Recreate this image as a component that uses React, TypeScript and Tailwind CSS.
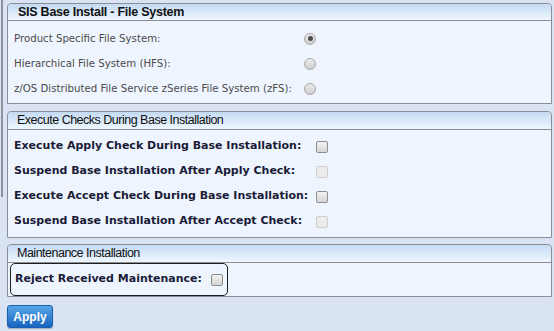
import React from "react";

const radioRows = [
  { label: "Product Specific File System:", checked: true },
  { label: "Hierarchical File System (HFS):", checked: false },
  { label: "z/OS Distributed File Service zSeries File System (zFS):", checked: false },
];

const checkRows = [
  { label: "Execute Apply Check During Base Installation:", disabled: false },
  { label: "Suspend Base Installation After Apply Check:", disabled: true },
  { label: "Execute Accept Check During Base Installation:", disabled: false },
  { label: "Suspend Base Installation After Accept Check:", disabled: true },
];

const Radio: React.FC<{ checked: boolean }> = ({ checked }) => (
  <span className="flex h-[12px] w-[12px] items-center justify-center rounded-full border border-[#a9a9a9] bg-gradient-to-b from-[#ececec] to-[#cfcfcf]">
    {checked && <span className="h-[5px] w-[5px] rounded-full bg-[#4a4a4a]" />}
  </span>
);

const Checkbox: React.FC<{ disabled?: boolean }> = ({ disabled }) =>
  disabled ? (
    <span className="block h-[12px] w-[12px] rounded-[2px] border border-[#cfcfcf] bg-[#ebebeb]" />
  ) : (
    <span className="block h-[12px] w-[12px] rounded-[2px] border border-[#8f8f8f] bg-gradient-to-b from-[#f2f2f2] to-[#d6d6d6]" />
  );

const PanelHeader: React.FC<{ title: string; bold?: boolean }> = ({ title, bold }) => (
  <div
    className={`flex items-center rounded-t-[4px] border-b border-[#8b8f95] bg-gradient-to-b from-[#c4daf3] to-[#eef7fe] text-[12.5px] leading-none text-[#111] ${
      bold ? "h-[17px] pl-[10px] font-bold tracking-[-0.25px]" : "h-[18px] pl-[9px] font-normal tracking-[-0.5px]"
    }`}
    style={{ fontFamily: '"Liberation Sans", Arial, sans-serif' }}
  >
    {title}
  </div>
);

const App: React.FC = () => {
  return (
    <div className="flex h-[331px] w-[554px] overflow-hidden bg-[#dae3f3]">
      <div className="ml-[1px] h-[197px] w-[2px] shrink-0 bg-[#8e939b]" />

      <div className="ml-[4px] mr-[2px] mt-[3px] flex flex-1 flex-col">
        {/* File system */}
        <div className="mb-[7px] rounded-t-[4px] border border-[#8b8f95] bg-[#eef5fe]">
          <PanelHeader title="SIS Base Install - File System" bold />
          <div
            className="flex flex-col pb-[2px] pl-[6px] pt-[5px] text-[10.2px] text-[#4b4b4b]"
            style={{ fontFamily: '"DejaVu Sans", Verdana, sans-serif' }}
          >
            {radioRows.map((row) => (
              <div key={row.label} className="flex h-[25px] items-center">
                <span className="w-[290px] whitespace-nowrap">{row.label}</span>
                <Radio checked={row.checked} />
              </div>
            ))}
          </div>
        </div>

        {/* Checks */}
        <div className="mb-[6px] rounded-t-[4px] border border-[#8b8f95] bg-[#eef5fe]">
          <PanelHeader title="Execute Checks During Base Installation" />
          <div
            className="flex flex-col pb-[3px] pl-[6px] pt-[4px] text-[11px] font-bold text-[#1b1b38]"
            style={{ fontFamily: '"DejaVu Sans", Verdana, sans-serif' }}
          >
            {checkRows.map((row) => (
              <div key={row.label} className="flex h-[25px] items-center">
                <span className="w-[302px] whitespace-nowrap">{row.label}</span>
                <Checkbox disabled={row.disabled} />
              </div>
            ))}
          </div>
        </div>

        {/* Maintenance */}
        <div className="rounded-t-[4px] border border-[#8b8f95] bg-[#eef5fe]">
          <PanelHeader title="Maintenance Installation" />
          <div className="flex pl-[2px]">
            <div
              className="flex h-[33px] w-[218px] items-center gap-[9px] rounded-[5px] border-[1.5px] border-[#1e1e1e] pl-[4px] text-[11px] font-bold text-[#1b1b38]"
              style={{ fontFamily: '"DejaVu Sans", Verdana, sans-serif' }}
            >
              <span className="whitespace-nowrap">Reject Received Maintenance:</span>
              <Checkbox />
            </div>
          </div>
        </div>

        <div className="mt-[8px] flex">
          <button
            className="block h-[23px] w-[46px] rounded-[3px] border border-[#1a5fae] bg-gradient-to-b from-[#58a6e8] to-[#1565c0] text-[12px] font-bold leading-none text-white shadow-[0_1px_1px_rgba(0,0,0,0.25)]"
            style={{ fontFamily: '"Liberation Sans", Arial, sans-serif' }}
          >
            Apply
          </button>
        </div>
      </div>
    </div>
  );
};

export default App;
